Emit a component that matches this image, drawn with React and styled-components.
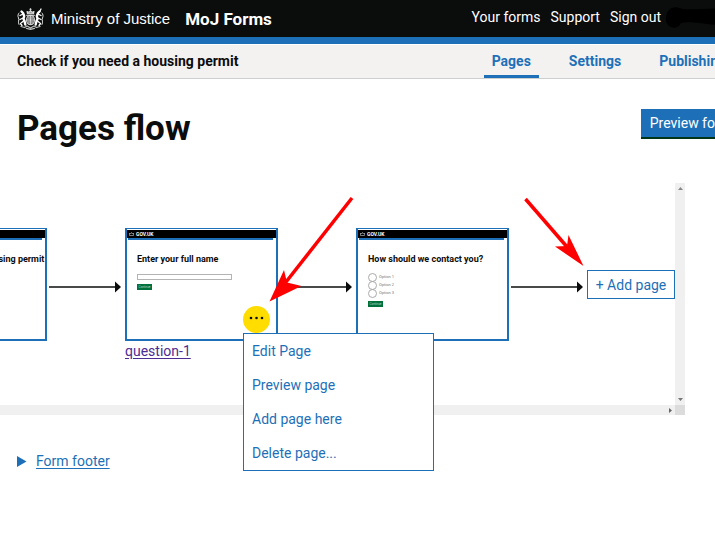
import React from "react";
import styled, { createGlobalStyle } from "styled-components";

const blue = "#1d70b8";
const black = "#0b0c0c";

const GlobalStyle = createGlobalStyle`
  * { box-sizing: border-box; }
  body {
    margin: 0;
    overflow-x: hidden;
    background: #fff;
    color: ${black};
    font-family: Roboto, "Noto Sans", sans-serif;
    font-size: 14px;
    line-height: 20px;
  }
  button { font: inherit; cursor: pointer; }
`;

const Page = styled.div`
  overflow-x: clip;
`;

const Bar = styled.div`
  min-width: 760px;
  padding: 0 17px;
  display: flex;
  justify-content: space-between;
`;

const Header = styled.header`
  background: ${black};
  border-bottom: 7px solid ${blue};
`;

const HeaderBar = styled(Bar)`
  height: 37px;
  align-items: center;
`;

const Brand = styled.a`
  display: flex;
  align-items: center;
  gap: 7px;
  color: #fff;
  text-decoration: none;
  white-space: nowrap;
`;

const Organisation = styled.span`
  font-family: "Liberation Sans", Arial, sans-serif;
  font-size: 15px;
`;

const Product = styled.strong`
  margin-left: 8px;
  font-size: 17px;
`;

const AccountNav = styled.nav`
  display: flex;
  align-items: center;
  gap: 10px;
  padding-bottom: 4px;
`;

const AccountLink = styled.a`
  color: #fff;
  text-decoration: none;
  white-space: nowrap;
`;

const UserMask = styled.svg`
  display: block;
  margin-left: -6px;
  margin-top: 2px;
`;

const FormBar = styled.div`
  margin-top: 1px;
  background: #f3f2f1;
  border-bottom: 1px solid #cccfd0;
`;

const FormBarInner = styled(Bar)`
  height: 33px;
`;

const FormName = styled.strong`
  line-height: 33px;
  white-space: nowrap;
`;

const Tabs = styled.nav`
  display: flex;
  gap: 22px;
  padding-right: 9px;
`;

const Tab = styled.a`
  padding: 0 8px;
  line-height: 33px;
  font-weight: 700;
  color: ${blue};
  text-decoration: none;
  border-bottom: ${(p) => (p.$active ? `3px solid ${blue}` : "0")};
`;

const TitleRow = styled(Bar)`
  padding-top: 30px;
  align-items: flex-start;
`;

const Title = styled.h1`
  margin: 0;
  font-size: 35px;
  line-height: 40px;
`;

const PreviewButton = styled.button`
  height: 30px;
  margin-right: 2px;
  padding: 0 9px;
  border: 0;
  border-bottom: 2px solid #003618;
  background: ${blue};
  color: #fff;
  white-space: nowrap;
`;

const FlowPanel = styled.section`
  display: grid;
  grid-template-columns: minmax(0, 1fr) 10px;
  grid-template-rows: 222px 10px;
  margin: 34px 30px 0 0;
`;

const FlowTrack = styled.div`
  display: flex;
  justify-content: flex-end;
  align-items: flex-start;
  padding-top: 45px;
`;

const ScrollTrack = styled.div`
  display: flex;
  flex-direction: ${(p) => (p.$vertical ? "column" : "row")};
  justify-content: ${(p) => (p.$vertical ? "space-between" : "flex-end")};
  align-items: center;
  padding: ${(p) => (p.$vertical ? "4px 0" : "0 3px")};
  background: #f0f0f0;
`;

const ScrollCorner = styled.div`
  background: #dcdcdc;
`;

const Step = styled.div`
  position: relative;
  flex: none;
  width: 153px;
`;

const Thumbnail = styled.div`
  height: 113px;
  border: 2px solid ${blue};
  border-top-width: 1px;
  overflow: hidden;
  background: #fff;
`;

const ThumbHeader = styled.div`
  height: 8px;
  margin-top: 1px;
  padding-left: 2px;
  display: flex;
  align-items: center;
  gap: 2px;
  background: #000;
  color: #fff;
  font-size: 5px;
  font-weight: 700;
  line-height: 8px;
`;

const ThumbRule = styled.div`
  height: 2px;
  margin: 0 3px 0 1px;
  background: ${blue};
`;

const ThumbBody = styled.div`
  padding: 13px 0 0 ${(p) => (p.$compact ? 6 : 10)}px;
`;

const ThumbTitle = styled.div`
  font-size: 9px;
  font-weight: 700;
  line-height: 12px;
  white-space: nowrap;
`;

const ThumbInput = styled.div`
  width: 95px;
  height: 6px;
  margin-top: 9px;
  border: 1px solid #b4b4b4;
`;

const ThumbOptions = styled.div`
  display: grid;
  margin-top: 8px;
`;

const ThumbOption = styled.div`
  height: 8px;
  display: flex;
  align-items: center;
  gap: 2px;
  color: #777;
  font-size: 4px;
  line-height: 8px;

  &::before {
    content: "";
    width: 7px;
    height: 7px;
    border: 1px solid #aaa;
    border-radius: 50%;
  }
`;

const ThumbContinue = styled.div`
  width: 15px;
  height: 6px;
  margin-top: 4px;
  background: #00703c;
  color: #b8d8c8;
  font-size: 3px;
  line-height: 6px;
  text-align: center;
`;

const StepLink = styled.a`
  display: inline-block;
  color: #4c2c92;
  text-underline-offset: 2px;
`;

const MenuButton = styled.button`
  position: absolute;
  top: 78px;
  left: 118px;
  width: 27px;
  height: 27px;
  padding: 0;
  border: 0;
  border-radius: 50%;
  background: #ffdd00;

  svg { display: block; }
`;

const Menu = styled.ul`
  position: absolute;
  z-index: 2;
  top: 105px;
  left: 118px;
  width: 191px;
  margin: 0;
  padding: 0;
  list-style: none;
  border: 1px solid ${blue};
  background: #fff;
`;

const MenuItem = styled.button`
  display: block;
  width: 100%;
  height: 34px;
  padding: 0 8px;
  border: 0;
  background: none;
  color: ${blue};
  text-align: left;
`;

const Connector = styled.svg`
  flex: none;
  margin-top: 53px;
`;

const AddButton = styled.button`
  flex: none;
  width: 88px;
  height: 29px;
  margin-top: 42px;
  padding: 0;
  border: 1px solid ${blue};
  background: #fff;
  color: ${blue};
  white-space: nowrap;
`;

const Footer = styled.details`
  margin: 36px 17px 16px;
`;

const FooterSummary = styled.summary`
  display: flex;
  align-items: center;
  gap: 9px;
  color: ${blue};
  cursor: pointer;
  list-style: none;

  span {
    text-decoration: underline;
    text-underline-offset: 2px;
  }
`;

const Pointer = styled.svg`
  position: absolute;
  z-index: 3;
  top: ${(p) => p.$top}px;
  left: ${(p) => p.$left}px;
  pointer-events: none;
`;

function Crest() {
  return (
    <svg width="27" height="22" viewBox="0 0 27 22" aria-hidden="true">
      <g fill="none" stroke="#fff" strokeLinecap="round" strokeLinejoin="round">
        <path strokeWidth="2.400" d="M4.500 3.500l1.500 1.500 1.200 3-.7 3 1 2 .8 3.500" />
        <path strokeWidth="1.300" d="M6 10l-3 1.500M6.500 13L3.500 15.500l1.500 2M6 6L3 7.500" />
        <path strokeWidth="1" stroke="#ddd" d="M2 16.500C.5 14 2.500 12 1.500 10S1 6 2 5" />
        <path strokeWidth="2.400" d="M22.500 3.500L21 5l-1.200 3 .7 3-1 2-.8 3.500" />
        <path strokeWidth="1.300" d="M21 10l3 1.500M20.500 13l3 2.500-1.500 2M21 6l3 1.500M22.500 4L24 1" />
        <path strokeWidth="1" stroke="#ddd" d="M25 16.500c1.500-2.500-.5-4.500.5-6.500s.5-4-.5-5" />
        <ellipse cx="13.500" cy="12" rx="4" ry="4.700" strokeWidth="1.200" stroke="#ccc" fill="#666" />
        <path strokeWidth=".7" stroke="#eee" d="M13.500 8v8M10.500 12h6M11.500 10h1M14.500 10h1M11.500 14h1M14.500 14h1" />
        <path strokeWidth="1.100" stroke="#ddd" fill="#999" d="M10.500 5.800L10 3.500l2 .8 1.500-1.600L15 4.300l2-.8-.5 2.300z" />
        <path strokeWidth="1" stroke="#ddd" d="M13.500 2.300V.7M12.800 1.300h1.400M9.500 7.300h8" />
        <path strokeWidth="1.300" stroke="#bbb" d="M4 18.500l3.500 1L10 18l3.500 2L17 18l2.500 1.500 3.500-1M9.500 20.300l4 1.100 4-1.100" />
      </g>
    </svg>
  );
}

function Arrow() {
  return (
    <Connector width="78" height="12" viewBox="0 0 78 12" aria-hidden="true">
      <path d="M2 6H70" stroke={black} strokeWidth="1.500" />
      <path d="M68 .5L74 6l-6 5.500z" fill={black} />
    </Connector>
  );
}

function PagePreview({ title, compact, children }) {
  return (
    <Thumbnail>
      <ThumbHeader>
        <svg width="5" height="4" viewBox="0 0 5 4" aria-hidden="true">
          <path d="M.5 1v2.500h4V1L3.500 2l-1-1.500-1 1.500z" fill="none" stroke="#ccc" strokeWidth=".6" />
        </svg>
        GOV.UK
      </ThumbHeader>
      <ThumbRule />
      <ThumbBody $compact={compact}>
        <ThumbTitle>{title}</ThumbTitle>
        {children}
      </ThumbBody>
    </Thumbnail>
  );
}

const menuItems = ["Edit Page", "Preview page", "Add page here", "Delete page..."];
const options = ["Option 1", "Option 2", "Option 3"];

export default function App() {
  return (
    <Page>
      <GlobalStyle />
      <Header>
        <HeaderBar>
          <Brand href="#home">
            <Crest />
            <Organisation>Ministry of Justice</Organisation>
            <Product>MoJ Forms</Product>
          </Brand>
          <AccountNav aria-label="Account">
            <AccountLink href="#forms">Your forms</AccountLink>
            <AccountLink href="#support">Support</AccountLink>
            <AccountLink href="#signout">Sign out</AccountLink>
            <UserMask width="78" height="24" viewBox="0 0 78 24" aria-hidden="true">
              <path d="M7 2c4-2 8 0 11 1 16 1 30-2 61 0v16c-20 1-30 0-45-2-8-1-14-1-18 0-2 5-8 6-12 3-5-4-4-15 3-18z" fill="#000" />
            </UserMask>
          </AccountNav>
        </HeaderBar>
      </Header>
      <FormBar>
        <FormBarInner>
          <FormName>Check if you need a housing permit</FormName>
          <Tabs aria-label="Form">
            <Tab href="#pages" $active aria-current="page">Pages</Tab>
            <Tab href="#settings">Settings</Tab>
            <Tab href="#publishing">Publishing</Tab>
          </Tabs>
        </FormBarInner>
      </FormBar>
      <main>
        <TitleRow>
          <Title>Pages flow</Title>
          <PreviewButton type="button">Preview form</PreviewButton>
        </TitleRow>
        <FlowPanel aria-label="Pages flow">
          <FlowTrack>
            <Step>
              <PagePreview compact title="Check if you need a housing permit" />
            </Step>
            <Arrow />
            <Step>
              <PagePreview title="Enter your full name">
                <ThumbInput />
                <ThumbContinue>Continue</ThumbContinue>
              </PagePreview>
              <StepLink href="#question-1">question-1</StepLink>
              <MenuButton type="button" aria-label="Page menu" aria-expanded="true">
                <svg width="27" height="27" viewBox="0 0 27 27" aria-hidden="true">
                  <g fill={black}>
                    <circle cx="8" cy="12" r="1.300" />
                    <circle cx="13.500" cy="12" r="1.300" />
                    <circle cx="19" cy="12" r="1.300" />
                  </g>
                </svg>
              </MenuButton>
              <Menu>
                {menuItems.map((item) => (
                  <li key={item}><MenuItem type="button">{item}</MenuItem></li>
                ))}
              </Menu>
            </Step>
            <Arrow />
            <Step>
              <PagePreview title="How should we contact you?">
                <ThumbOptions>
                  {options.map((o) => <ThumbOption key={o}>{o}</ThumbOption>)}
                </ThumbOptions>
                <ThumbContinue>Continue</ThumbContinue>
              </PagePreview>
            </Step>
            <Arrow />
            <AddButton type="button">+ Add page</AddButton>
          </FlowTrack>
          <ScrollTrack $vertical>
            <svg width="5" height="3" viewBox="0 0 5 3" aria-hidden="true"><path d="M0 3L2.500 0 5 3z" fill="#888" /></svg>
            <svg width="5" height="3" viewBox="0 0 5 3" aria-hidden="true"><path d="M0 0L2.500 3 5 0z" fill="#777" /></svg>
          </ScrollTrack>
          <ScrollTrack>
            <svg width="3" height="5" viewBox="0 0 3 5" aria-hidden="true"><path d="M0 0L3 2.500 0 5z" fill="#666" /></svg>
          </ScrollTrack>
          <ScrollCorner />
        </FlowPanel>
        <Footer>
          <FooterSummary>
            <svg width="10" height="11" viewBox="0 0 10 11" aria-hidden="true"><path d="M0 0L9.500 5.500 0 11z" fill={blue} /></svg>
            <span>Form footer</span>
          </FooterSummary>
        </Footer>
      </main>
      <Pointer $top={195} $left={266} width="90" height="110" viewBox="0 0 90 110" aria-hidden="true">
        <path d="M86 3L20 87" stroke="#f00" strokeWidth="3.500" />
        <path d="M3.500 106.500L18 75l3 12.500L35.500 91z" fill="#f00" />
      </Pointer>
      <Pointer $top={195} $left={520} width="68" height="75" viewBox="0 0 68 75" aria-hidden="true">
        <path d="M5.500 4L48 53" stroke="#f00" strokeWidth="3.500" />
        <path d="M63.500 71L35 51.500 47 51l1.500-11z" fill="#f00" />
      </Pointer>
    </Page>
  );
}
